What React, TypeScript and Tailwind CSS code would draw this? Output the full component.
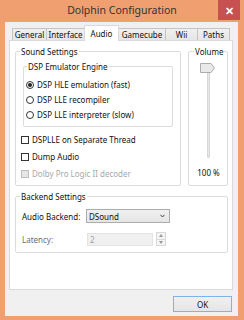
import type { ReactNode } from "react";

const tabs = ["General", "Interface", "Audio", "Gamecube", "Wii", "Paths"];
const tabWidths: Record<string, string> = {
  General: "w-[35px]",
  Interface: "w-[39px]",
  Audio: "w-[35px]",
  Gamecube: "w-[48px]",
  Wii: "w-[33px]",
  Paths: "w-[33px]",
};

function Group({ title, className, legendClass, children }: { title: string; className?: string; legendClass?: string; children: ReactNode }) {
  return (
    <fieldset className={`rounded-[2px] border border-[#DCDCDC] ${className ?? ""}`}>
      <legend className={`px-[1px] leading-[11px] ${legendClass ?? "ml-[4px]"}`}>{title}</legend>
      {children}
    </fieldset>
  );
}

function Radio({ label, checked }: { label: string; checked?: boolean }) {
  return (
    <div className="flex h-[15px] items-center gap-[3px]">
      <span className="flex h-[8px] w-[8px] items-center justify-center rounded-full border border-[#333] bg-white">
        {checked && <span className="h-[4px] w-[4px] rounded-full bg-[#222]" />}
      </span>
      <span>{label}</span>
    </div>
  );
}

function Check({ label, disabled }: { label: string; disabled?: boolean }) {
  return (
    <div className={`flex h-[17px] items-center gap-[3px] ${disabled ? "text-[#A8A8A8]" : ""}`}>
      <span className={`h-[8px] w-[8px] border ${disabled ? "border-[#BCBCBC] bg-[#E6E6E6]" : "border-[#333] bg-white"}`} />
      <span>{label}</span>
    </div>
  );
}

export default function App() {
  return (
    <div className="flex h-[320px] w-[244px] flex-col bg-[#F0A070] font-['Noto_Sans',sans-serif] text-[8px] leading-[11px] text-[#111]">
      {/* title bar */}
      <div className="grid h-[22px] grid-cols-[26px_1fr_26px]">
        <div />
        <div className="flex items-center justify-center pb-[1px] text-[10.5px] text-[#333]">Dolphin Configuration</div>
        <div className="flex h-[20px] w-[22px] items-center justify-center bg-[#C75050] text-[11px] font-bold text-white">✕</div>
      </div>

      {/* client area */}
      <div className="mb-[4px] ml-[5px] mr-[6px] flex flex-1 flex-col bg-[#F0F0F0]">
        <div className="flex h-[18px] items-end pl-[8px]">
          {tabs.map((t) =>
            t === "Audio" ? (
              <div key={t} className={`relative z-10 -mb-px -ml-px flex h-[16px] items-center justify-center border border-b-0 border-[#D9D9D9] bg-white pb-[1px] ${tabWidths[t]}`}>
                {t}
              </div>
            ) : (
              <div key={t} className={`-ml-px flex h-[12px] items-center justify-center border border-b-0 border-[#C4C4C4] bg-gradient-to-b from-[#F0F0F0] to-[#E5E5E5] ${tabWidths[t]}`}>
                {t}
              </div>
            )
          )}
        </div>

        <div className="ml-[4px] h-[250px] w-[224px] border border-[#D9D9D9] bg-white pl-[5px] pr-[4px] pt-[5px]">
          <div className="flex gap-[7px]">
            <Group title="Sound Settings" className="w-[166px]">
              <div className="pb-[3px] pl-[5px] pr-[7px]">
                <Group title="DSP Emulator Engine" className="mt-[4px] ml-[2px]" legendClass="ml-[3px]">
                  <div className="mt-[5px] pb-[4px] pl-[2px]">
                    <Radio label="DSP HLE emulation (fast)" checked />
                    <Radio label="DSP LLE recompiler" />
                    <Radio label="DSP LLE interpreter (slow)" />
                  </div>
                </Group>
                <div className="mt-[4px]">
                  <Check label="DSPLLE on Separate Thread" />
                  <Check label="Dump Audio" />
                  <Check label="Dolby Pro Logic II decoder" disabled />
                </div>
              </div>
            </Group>

            <Group title="Volume" className="w-[40px]" legendClass="ml-[5px]">
              <div className="flex flex-col items-center">
                <div className="relative mt-[5px] flex h-[97px] w-full justify-center pl-[1px]">
                  <div className="mt-[1px] h-[95px] w-[3px] rounded-[1px] border border-[#D6D6D6] bg-[#E7E7E7]" />
                  <svg className="absolute left-[11px] top-[1px]" width="16" height="10" viewBox="0 0 16 10">
                    <path d="M0.5 0.5 H11 L14.5 5 L11 9.5 H0.5 Z" fill="#E9E9E9" stroke="#ACACAC" />
                  </svg>
                </div>
                <div className="mt-[8px] pl-[1px]">100 %</div>
              </div>
            </Group>
          </div>

          <Group title="Backend Settings" className="mt-[5px] w-[213px]">
            <div className="grid grid-cols-[64px_1fr] items-center gap-y-[9px] pb-[6px] pl-[6px] pt-[7px]">
              <span>Audio Backend:</span>
              <div className="flex h-[14px] w-[84px] items-center justify-between border border-[#ACACAC] bg-gradient-to-b from-[#F0F0F0] to-[#E5E5E5] pl-[2px] pr-[4px]">
                <span>DSound</span>
                <svg width="5" height="4" viewBox="0 0 5 4">
                  <path d="M0.5 0.8 L2.5 3 L4.5 0.8" fill="none" stroke="#444" strokeWidth="1" />
                </svg>
              </div>
              <span className="text-[#6D6D6D]">Latency:</span>
              <div className="ml-[1px] flex items-center gap-[3px]">
                <div className="flex h-[13px] w-[66px] items-center border border-[#E3E3E3] bg-[#F0F0F0] pl-[2px] text-[#A0A0A0]">2</div>
                <div className="flex h-[14px] w-[10px] flex-col">
                  <div className="flex flex-1 items-center justify-center border border-[#D9D9D9] bg-[#F4F4F4]">
                    <svg width="4" height="3" viewBox="0 0 4 3"><path d="M0 3 L2 0 L4 3 Z" fill="#9A9A9A" /></svg>
                  </div>
                  <div className="flex flex-1 items-center justify-center border border-t-0 border-[#D9D9D9] bg-[#F4F4F4]">
                    <svg width="4" height="3" viewBox="0 0 4 3"><path d="M0 0 L4 0 L2 3 Z" fill="#9A9A9A" /></svg>
                  </div>
                </div>
              </div>
            </div>
          </Group>
        </div>

        <div className="flex justify-end pr-[6px] pt-[6px]">
          <div className="flex h-[16px] w-[59px] items-center justify-center border border-[#7EB4EA] bg-gradient-to-b from-[#F0F0F0] to-[#E5E5E5]">OK</div>
        </div>
      </div>
    </div>
  );
}
